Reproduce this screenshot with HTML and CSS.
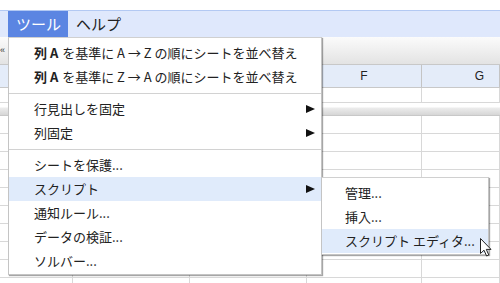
FILE: index.html
```html
<!DOCTYPE html>
<html>
<head>
    <title>ツール メニュー</title>
    <link rel="stylesheet" href="styles.css">
</head>
<body>
    <div class="top-gap"></div>
    <div class="menubar">
        <span class="menubar-item active">ツール</span>
        <span class="menubar-item">ヘルプ</span>
    </div>

    <div class="sheet">
        <div class="toolbar"><span class="toolbar-glyph">«</span></div>
        <div class="grid-row col-header">
            <div class="cell"></div>
            <div class="cell"></div>
            <div class="cell"></div>
            <div class="cell">F</div>
            <div class="cell last">G</div>
        </div>
        <div class="grid-row first-row">
            <div class="cell"></div><div class="cell"></div><div class="cell"></div><div class="cell"></div><div class="cell"></div>
        </div>
        <div class="freeze-bar"></div>
        <div id="rows"></div>
    </div>

    <div class="menu">
        <div class="menu-item"><span><b>列 A</b> を基準に A → Z の順にシートを並べ替え</span></div>
        <div class="menu-item"><span><b>列 A</b> を基準に Z → A の順にシートを並べ替え</span></div>
        <div class="separator"></div>
        <div class="menu-item"><span class="arrow"></span>行見出しを固定</div>
        <div class="menu-item"><span class="arrow"></span>列固定</div>
        <div class="separator"></div>
        <div class="menu-item">シートを保護...</div>
        <div class="menu-item hover"><span class="arrow"></span>スクリプト</div>
        <div class="menu-item">通知ルール...</div>
        <div class="menu-item">データの検証...</div>
        <div class="menu-item">ソルバー...</div>
    </div>

    <div class="menu submenu">
        <div class="menu-item">管理...</div>
        <div class="menu-item">挿入...</div>
        <div class="menu-item hover">スクリプト エディタ...</div>
    </div>

    <svg class="cursor" width="12" height="19" viewBox="0 0 12 19">
        <path d="M0.5 0.5 L0.5 15.5 L4 12.2 L6.6 18 L8.8 17 L6.3 11.4 L11 11.4 Z" fill="#fff" stroke="#222" stroke-width="1"/>
    </svg>

    <script>
        // fill the rest of the sheet with empty rows
        const rows = document.getElementById('rows');
        for (let i = 0; i < 10; i++) {
            const row = document.createElement('div');
            row.className = 'grid-row';
            for (let j = 0; j < 5; j++) {
                const cell = document.createElement('div');
                cell.className = 'cell';
                row.appendChild(cell);
            }
            rows.appendChild(row);
        }
    </script>
</body>
</html>
```

FILE: styles.css
```css
body {
    margin: 0;
    font-family: "Noto Sans CJK JP", "Liberation Sans", sans-serif;
    background-color: white;
    overflow: hidden;
    width: 500px;
    height: 283px;
    position: relative;
}
.top-gap {
    height: 10px;
}
.menubar {
    display: flex;
    height: 26px;
    border-top: 1px solid #b3c9f3;
    background-color: #dfe8fc;
    padding-left: 8px;
}
.menubar-item {
    font-size: 15px;
    line-height: 26px;
    padding: 0 8px;
    color: #222;
}
.menubar-item.active {
    background-color: #5b85e2;
    color: white;
    padding-right: 7px;
}
.sheet {
    font-family: "Liberation Sans", Arial, sans-serif;
    overflow: hidden;
}
.toolbar {
    height: 27px;
    border-bottom: 1px solid #c8c8c8;
    background: linear-gradient(#fbfbfb, #e3e3e3);
}
.toolbar-glyph {
    display: inline-block;
    width: 8px;
    margin-top: 8px;
    font-size: 9px;
    line-height: 10px;
    color: #333;
}
.grid-row {
    display: grid;
    grid-template-columns: 73px 117px 117px 115px 1fr;
    height: 17px;
    border-bottom: 1px solid #d8d8d8;
}
.cell {
    border-right: 1px solid #d8d8d8;
}
.col-header {
    height: 22px;
    background-color: #e4ecf9;
    border-bottom: 1px solid #c8c8c8;
}
.col-header .cell {
    font-size: 12px;
    line-height: 22px;
    text-align: center;
    color: #222;
    border-right-color: #c4c4c4;
}
.col-header .last {
    padding-left: 38px;
}
.first-row {
    height: 14px;
}
.freeze-bar {
    height: 12px;
    background: linear-gradient(white 0, white 4px, #ececec 5px, #d6d6d6 100%);
    border-bottom: 1px solid #c8c8c8;
}
.menu {
    position: absolute;
    left: 8px;
    top: 37px;
    width: 312px;
    padding: 3px 0 1px;
    background: white;
    border: 1px solid #c4c4c4;
    border-top-color: #d0d0d0;
    box-shadow: 1px 1px 1px rgba(0, 0, 0, 0.35);
}
.menu-item {
    height: 24px;
    line-height: 24px;
    padding-left: 25px;
    padding-right: 6px;
    font-size: 13px;
    color: #222;
    white-space: nowrap;
}
.menu-item b {
    margin-right: 1px;
}
.menu-item.hover {
    background-color: #e0ebfb;
}
.arrow {
    float: right;
    width: 0;
    height: 0;
    margin-top: 7.5px;
    border-top: 4.5px solid transparent;
    border-bottom: 4.5px solid transparent;
    border-left: 9px solid #111;
}
.separator {
    height: 1px;
    margin: 4px 0 3px;
    background-color: #d2d2d2;
}
.submenu {
    left: 321px;
    top: 177px;
    width: 166px;
}
.submenu .menu-item {
    padding-left: 23px;
}
.cursor {
    position: absolute;
    left: 480px;
    top: 238px;
}
```
